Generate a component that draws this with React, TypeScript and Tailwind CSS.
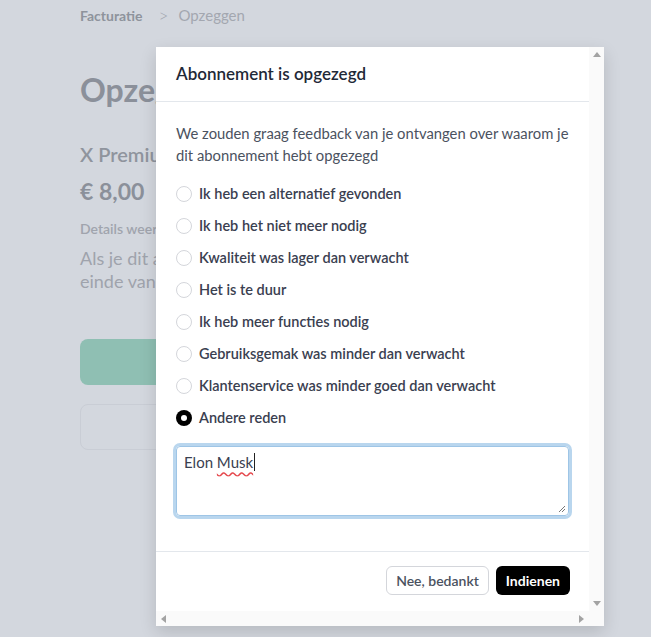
import { useState } from "react";

const reasons = [
  "Ik heb een alternatief gevonden",
  "Ik heb het niet meer nodig",
  "Kwaliteit was lager dan verwacht",
  "Het is te duur",
  "Ik heb meer functies nodig",
  "Gebruiksgemak was minder dan verwacht",
  "Klantenservice was minder goed dan verwacht",
  "Andere reden",
];

const Radio = ({ checked }: { checked: boolean }) =>
  checked ? (
    <span className="flex h-4 w-4 shrink-0 items-center justify-center rounded-full bg-black">
      <span className="h-1.5 w-1.5 rounded-full bg-white" />
    </span>
  ) : (
    <span className="h-4 w-4 shrink-0 rounded-full border border-[#d4d6db] bg-white" />
  );

const Arrow = ({ dir }: { dir: "up" | "down" | "left" | "right" }) => {
  const pts = {
    up: "0,6 4,1 8,6",
    down: "0,1 8,1 4,6",
    left: "6,0 6,8 1,4",
    right: "1,0 1,8 6,4",
  }[dir];
  const vertical = dir === "up" || dir === "down";
  return (
    <svg width={vertical ? 8 : 7} height={vertical ? 7 : 8} viewBox={vertical ? "0 0 8 7" : "0 0 7 8"}>
      <polygon points={pts} fill="#a3a3a3" />
    </svg>
  );
};

export default function App() {
  const [selected, setSelected] = useState(7);

  return (
    <div
      className="relative h-[637px] w-[651px] overflow-hidden bg-[#d3d7de]"
      style={{ fontFamily: "Lato, 'Noto Sans', sans-serif" }}
    >
      {/* page behind the dialog */}
      <div className="flex flex-col px-20 pt-[4px]">
        <div className="flex items-center text-sm">
          <span className="font-bold text-[#8e939c]">Facturatie</span>
          <span className="ml-[16px] mr-[10px] text-[17px] font-light text-[#a3a7b0]">&gt;</span>
          <span className="text-[15px] text-[#a3a7b0]">Opzeggen</span>
        </div>
        <h1 className="mt-[38px] text-[32px] font-bold text-[#8b909a]">Opzeggen</h1>
        <div className="mt-[26px] text-xl font-semibold text-[#8f949d]">X Premium</div>
        <div className="mt-[6px] text-[23px] font-bold text-[#8b909a]">€ 8,00</div>
        <div className="mt-[9px] text-[14px] font-semibold text-[#a0a4ad]">Details weergeven</div>
        <p className="mt-[8px] text-[18px] leading-[23px] text-[#9fa3ac]">
          Als je dit abonnement opzegt
          <br />
          einde van je factuurperiode
        </p>
        <div className="mt-[46px] h-[46px] w-[400px] rounded-lg bg-[#8fbfb3]" />
        <div className="mt-[19px] h-[46px] w-[400px] rounded-lg border border-[#c9cdd5]" />
      </div>

      {/* dialog */}
      <div className="absolute left-[156px] top-[47px] flex w-[448px] flex-col bg-white shadow-[0_6px_16px_rgba(0,0,0,0.14)]">
        <div className="flex">
          <div className="flex h-[564px] w-[433px] flex-col">
            <div className="flex h-[55px] shrink-0 items-center border-b border-[#e3e7ec] px-5">
              <h2 className="text-[17px] font-semibold text-[#1f2937]">Abonnement is opgezegd</h2>
            </div>
            <div className="flex flex-col px-5 pt-[20px]">
              <p className="text-[14.8px] leading-[22px] text-[#4b5260]">
                We zouden graag feedback van je ontvangen over waarom je dit abonnement hebt opgezegd
              </p>
              <div className="mt-[18px] flex flex-col gap-3">
                {reasons.map((r, i) => (
                  <label
                    key={r}
                    className="flex h-5 cursor-pointer items-center gap-[7px]"
                    onClick={() => setSelected(i)}
                  >
                    <Radio checked={selected === i} />
                    <span className="text-[14.5px] font-semibold text-[#3a4050]">{r}</span>
                  </label>
                ))}
              </div>
              <div className="relative mt-[18px] h-[70px] w-full rounded border border-[#9ec5e6] px-[7px] py-[3px] text-[15px] text-[#3a4050] ring-[3px] ring-[#b9d6ee]">
                <span>Elon </span>
                <span className="underline decoration-[#e5484d] decoration-wavy underline-offset-[3px]">Musk</span>
                <span className="ml-px inline-block h-[18px] w-px translate-y-[3px] bg-[#222]" />
                <svg className="absolute bottom-[2px] right-[2px]" width="8" height="8" viewBox="0 0 8 8">
                  <line x1="1" y1="7" x2="7" y2="1" stroke="#777" strokeWidth="1" />
                  <line x1="4" y1="7" x2="7" y2="4" stroke="#777" strokeWidth="1" />
                </svg>
              </div>
            </div>
            <div className="mt-auto flex justify-end gap-[7px] border-t border-[#e3e7ec] px-[19px] pb-[16px] pt-[14px]">
              <button className="h-[29px] rounded-md border border-[#d4d6db] bg-white px-[9px] text-sm font-semibold text-[#4b5260]">
                Nee, bedankt
              </button>
              <button className="h-[29px] rounded-md bg-black px-[10px] text-sm font-bold text-white">
                Indienen
              </button>
            </div>
          </div>
          {/* vertical scrollbar */}
          <div className="flex w-[15px] flex-col items-center justify-between bg-[#fafafa] py-[4px]">
            <Arrow dir="up" />
            <Arrow dir="down" />
          </div>
        </div>
        {/* horizontal scrollbar */}
        <div className="flex h-[15px]">
          <div className="flex w-[433px] items-center justify-between bg-[#fafafa] px-[4px]">
            <Arrow dir="left" />
            <Arrow dir="right" />
          </div>
          <div className="w-[15px] bg-[#fafafa]" />
        </div>
      </div>
    </div>
  );
}
